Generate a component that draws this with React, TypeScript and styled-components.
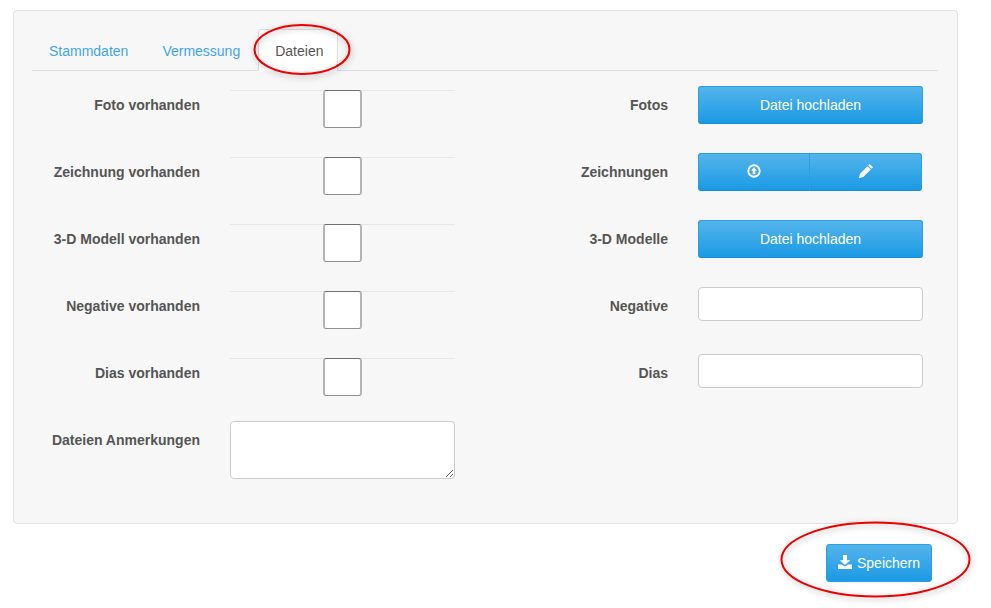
import styled, { createGlobalStyle } from "styled-components";

const GlobalStyle = createGlobalStyle`
  html, body {
    margin: 0;
    padding: 0;
    background: #fff;
    font-family: "Liberation Sans", Arial, sans-serif;
    font-size: 14px;
    color: #555;
  }
`;

const UploadIcon = () => (
  <svg width="14" height="14" viewBox="0 0 14 14" aria-hidden="true">
    <circle cx="7" cy="7" r="5.7" fill="none" stroke="#fff" strokeWidth="1.9" />
    <path d="M7 3.2 10 6.7H8.3V10.2H5.7V6.7H4Z" fill="#fff" />
  </svg>
);

const PencilIcon = () => (
  <svg width="16" height="16" viewBox="0 0 16 16" aria-hidden="true">
    <path d="M11.6 1 15 4.2 13.6 5.7 10.2 2.4ZM9.4 3.2 12.8 6.5 5.2 14 .9 15.2 2 10.8Z" fill="#fff" />
  </svg>
);

const DownloadIcon = () => (
  <svg width="14" height="14" viewBox="0 0 14 14" aria-hidden="true">
    <path d="M5 0H9V5.2H12.4L7 10 1.6 5.2H5ZM0 9.5H3.6L7 11.6 10.4 9.5H14V14H0Z" fill="#fff" />
  </svg>
);

const leftRows = [
  "Foto vorhanden",
  "Zeichnung vorhanden",
  "3-D Modell vorhanden",
  "Negative vorhanden",
  "Dias vorhanden",
];

export default function App() {
  return (
    <Page>
      <GlobalStyle />
      <Card>
        <Tabs>
          <Tab>Stammdaten</Tab>
          <Tab>Vermessung</Tab>
          <Tab $active>Dateien</Tab>
        </Tabs>
        <Columns>
          <Column>
            {leftRows.map((label) => (
              <Row key={label}>
                <Label>{label}</Label>
                <CheckCell>
                  <CheckBox type="checkbox" />
                </CheckCell>
              </Row>
            ))}
            <Row>
              <Label>Dateien Anmerkungen</Label>
              <Notes />
            </Row>
          </Column>
          <Column>
            <Row>
              <Label>Fotos</Label>
              <BlueButton type="button">Datei hochladen</BlueButton>
            </Row>
            <Row>
              <Label>Zeichnungen</Label>
              <ButtonGroup>
                <GroupButton type="button">
                  <UploadIcon />
                </GroupButton>
                <GroupButton type="button">
                  <PencilIcon />
                </GroupButton>
              </ButtonGroup>
            </Row>
            <Row>
              <Label>3-D Modelle</Label>
              <BlueButton type="button">Datei hochladen</BlueButton>
            </Row>
            <Row>
              <Label>Negative</Label>
              <TextInput type="text" />
            </Row>
            <Row>
              <Label>Dias</Label>
              <TextInput type="text" />
            </Row>
          </Column>
        </Columns>
      </Card>
      <Footer>
        <SaveButton type="button">
          <DownloadIcon />
          Speichern
        </SaveButton>
      </Footer>
      <Mark $left={253} $top={23} width="98" height="54" viewBox="0 0 98 54">
        <ellipse cx="49" cy="26.5" rx="47.5" ry="24.5" />
      </Mark>
      <Mark $left={780} $top={521} width="192" height="78" viewBox="0 0 192 78">
        <ellipse cx="95.5" cy="38.5" rx="94" ry="37" />
      </Mark>
    </Page>
  );
}

const Page = styled.div`
  position: relative;
  width: 991px;
  height: 608px;
  padding: 10px 0 0 13px;
  box-sizing: border-box;
  overflow: hidden;
`;

const Card = styled.div`
  width: 945px;
  height: 514px;
  box-sizing: border-box;
  padding: 18px 18px 0;
  background: #f7f7f7;
  border: 1px solid #e3e3e3;
  border-radius: 4px;
`;

const Tabs = styled.div`
  display: flex;
  width: 906px;
  height: 42px;
  box-sizing: border-box;
  padding-left: 1px;
  border-bottom: 1px solid #ddd;
`;

const Tab = styled.div<{ $active?: boolean }>`
  height: 42px;
  box-sizing: border-box;
  padding: ${(p) => (p.$active ? "11px 14px 0 16px" : "11px 15px 0")};
  margin-right: 2px;
  line-height: 20px;
  color: ${(p) => (p.$active ? "#555" : "#3fa5ec")};
  background: ${(p) => (p.$active ? "#fff" : "transparent")};
  border: 1px solid ${(p) => (p.$active ? "#ddd" : "transparent")};
  border-bottom-color: ${(p) => (p.$active ? "#fff" : "transparent")};
  border-radius: 4px 4px 0 0;
`;

const Columns = styled.div`
  display: grid;
  grid-template-columns: 423px 423px;
  column-gap: 45px;
  padding-top: 15px;
`;

const Column = styled.div`
  display: flex;
  flex-direction: column;
`;

const Row = styled.div`
  display: grid;
  grid-template-columns: 168px 225px;
  column-gap: 30px;
  align-items: start;
  height: 67px;
`;

const Label = styled.label`
  font-weight: 700;
  line-height: 38px;
  text-align: right;
  white-space: nowrap;
`;

const CheckCell = styled.div`
  display: flex;
  justify-content: center;
  height: 38px;
  margin-top: 4px;
  padding-right: 1px;
  border-top: 1px solid #e6e6e6;
`;

const CheckBox = styled.input`
  appearance: none;
  width: 39px;
  height: 38px;
  margin: -1px 0 0;
  box-sizing: border-box;
  background: #fff;
  border-style: solid;
  border-width: 1px 2px;
  border-color: #707070 #b4b4b4 #909090;
  border-radius: 3px;
`;

const Notes = styled.textarea`
  display: block;
  width: 225px;
  height: 58px;
  box-sizing: border-box;
  background: #fff;
  border: 1px solid #ccc;
  border-radius: 4px;
`;

const TextInput = styled.input`
  display: block;
  width: 225px;
  height: 34px;
  box-sizing: border-box;
  background: #fff;
  border: 1px solid #ccc;
  border-radius: 4px;
`;

const BlueButton = styled.button`
  width: 225px;
  height: 38px;
  padding: 0;
  color: #fff;
  font: 14px "Liberation Sans", Arial, sans-serif;
  background: linear-gradient(#54b4eb, #1a9ae4);
  border: 1px solid #2c9fe4;
  border-bottom-color: #178fd6;
  border-radius: 3px;
`;

const ButtonGroup = styled.div`
  display: grid;
  grid-template-columns: 112px 112px;
  width: 224px;
  height: 38px;
`;

const GroupButton = styled.button`
  display: flex;
  align-items: center;
  justify-content: center;
  padding: 0 0 3px;
  background: linear-gradient(#54b4eb, #1a9ae4);
  border: 1px solid #2c9fe4;
  border-bottom-color: #178fd6;
  border-radius: 3px 0 0 3px;

  & + & {
    margin-left: -1px;
    border-radius: 0 3px 3px 0;
  }
`;

const Footer = styled.div`
  display: flex;
  justify-content: flex-end;
  width: 945px;
  padding: 20px 26px 0 0;
  box-sizing: border-box;
`;

const SaveButton = styled.button`
  display: flex;
  align-items: center;
  justify-content: center;
  gap: 5px;
  width: 106px;
  height: 38px;
  padding: 0;
  color: #fff;
  font: 14px "Liberation Sans", Arial, sans-serif;
  background: linear-gradient(#54b4eb, #1a9ae4);
  border: 1px solid #2c9fe4;
  border-radius: 3px;

  svg {
    margin-bottom: 2px;
  }
`;

const Mark = styled.svg<{ $left: number; $top: number }>`
  position: absolute;
  left: ${(p) => p.$left}px;
  top: ${(p) => p.$top}px;
  overflow: visible;
  fill: none;
  stroke: #ee0000;
  stroke-width: 2px;
  filter: drop-shadow(1px 2px 3px rgba(0, 0, 0, 0.3));
`;
